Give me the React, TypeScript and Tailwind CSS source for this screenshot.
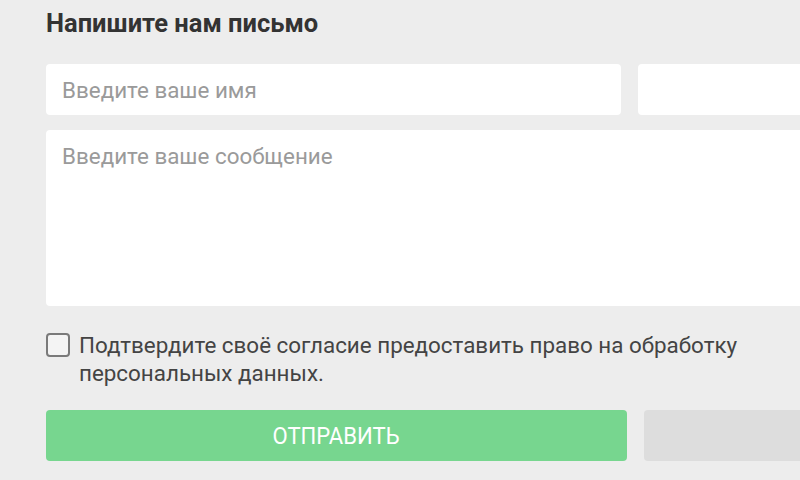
import { useState } from 'react';

export default function App() {
  const [agree, setAgree] = useState(false);

  return (
    <div className="h-[480px] w-[800px] overflow-hidden bg-[#ededed] font-['Roboto',sans-serif]">
      <form className="w-[1240px] pl-[46px] pt-[8px]">
        <h2 className="text-[25.5px] font-bold leading-[30px] text-[#333333]">Напишите нам письмо</h2>

        <div className="mt-[26px] flex gap-[17px]">
          <input
            type="text"
            placeholder="Введите ваше имя"
            className="h-[51px] w-[575px] rounded-[4px] bg-white px-4 text-[22.4px] text-[#333] outline-none placeholder:text-[#9a9a9a]"
          />
          <input
            type="email"
            className="h-[51px] w-[575px] rounded-[4px] bg-white px-4 text-[22.4px] text-[#333] outline-none"
          />
        </div>

        <textarea
          placeholder="Введите ваше сообщение"
          className="mt-[15px] block h-[176px] w-[1167px] resize-none rounded-[4px] bg-white px-4 py-[11px] text-[22.4px] leading-[30px] text-[#333] outline-none placeholder:text-[#9a9a9a]"
        />

        <label className="mt-[25px] flex w-[720px] cursor-pointer items-start gap-[9px] text-[22.4px] leading-[28px] text-[#444444]">
          <input
            type="checkbox"
            checked={agree}
            onChange={() => setAgree(!agree)}
            className="mt-[2px] h-[24px] w-[24px] shrink-0 appearance-none rounded-[4px] border-2 border-[#7a7a7a] bg-[#f4f4f4]"
          />
          <span>Подтвердите своё согласие предоставить право на обработку персональных данных.</span>
        </label>

        <div className="mt-[23px] flex gap-[17px]">
          <button
            type="submit"
            className="h-[51px] w-[581px] rounded-[4px] bg-[#77d68f] text-[24px] uppercase text-white"
          >
            <span className="inline-block scale-x-[0.92]">Отправить</span>
          </button>
          <button type="button" className="h-[51px] w-[581px] rounded-[4px] bg-[#dddddd]" />
        </div>
      </form>
    </div>
  );
}
